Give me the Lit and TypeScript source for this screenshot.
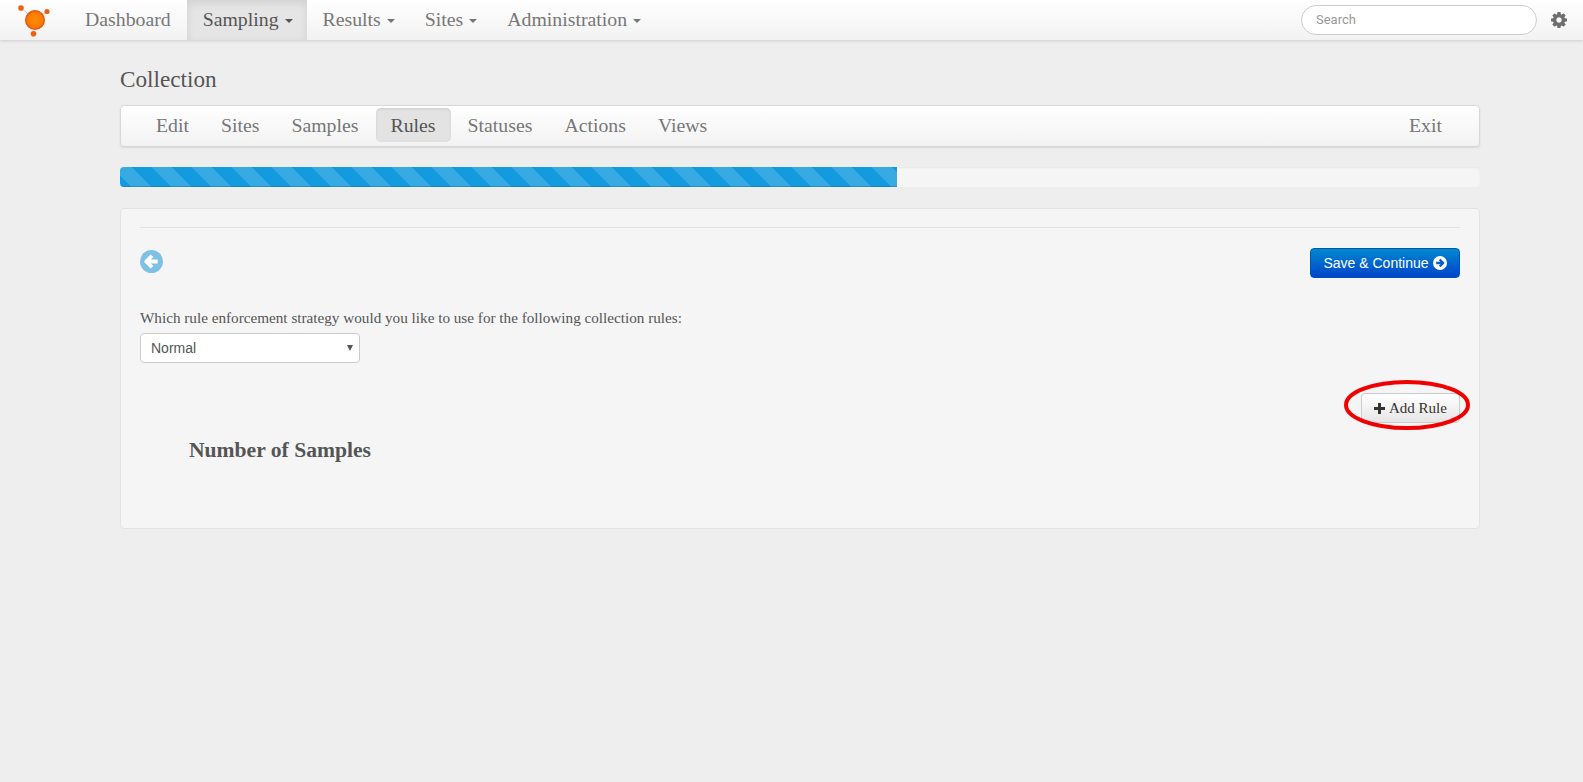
import { LitElement, html, css } from 'lit';
import { customElement } from 'lit/decorators.js';

const caret = html`<span class="caret"></span>`;

@customElement('app-root')
export class AppRoot extends LitElement {
  static styles = css`
    :host {
      display: block;
      min-height: 782px;
      background: #eeeeee;
      font-family: 'Liberation Serif', serif;
      color: #555;
      overflow: hidden;
    }
    .navbar {
      height: 40px;
      display: flex;
      align-items: stretch;
      background: linear-gradient(#ffffff, #f2f2f2);
      box-shadow: 0 1px 3px rgba(0, 0, 0, 0.14);
    }
    .brand {
      width: 69px;
      flex: none;
    }
    .brand svg {
      display: block;
    }
    .tab {
      display: flex;
      align-items: center;
      padding: 0 16px 2px;
      font-size: 19.8px;
      color: #777;
    }
    .tab.active {
      color: #555;
      background: #e5e5e5;
      box-shadow: inset 0 3px 8px rgba(0, 0, 0, 0.09);
    }
    .caret {
      display: inline-block;
      margin-left: 6px;
      margin-right: -2px;
      margin-top: 4px;
      border-top: 4px solid #777;
      border-left: 4px solid transparent;
      border-right: 4px solid transparent;
    }
    .active .caret {
      border-top-color: #555;
    }
    .spacer {
      flex: 1;
    }
    .search {
      align-self: center;
      box-sizing: border-box;
      width: 236px;
      height: 30px;
      margin-right: 14px;
      padding: 0 14px;
      border: 1px solid #cccccc;
      border-radius: 15px;
      background: #fff;
      font: 13px Roboto, sans-serif;
      line-height: 28px;
      color: #999;
    }
    .gear {
      align-self: center;
      margin-right: 16px;
      display: block;
    }
    .container {
      margin: 0 103px 0 120px;
    }
    h1 {
      margin: 25px 0 0;
      font-size: 23.2px;
      line-height: 28px;
      font-weight: 400;
      color: #555;
    }
    .subnav {
      margin-top: 12px;
      height: 42px;
      box-sizing: border-box;
      display: flex;
      align-items: flex-start;
      padding: 2px 20px 0;
      background: linear-gradient(#ffffff, #f2f2f2);
      border: 1px solid #d8d8d8;
      border-radius: 4px;
      box-shadow: 0 1px 2px rgba(0, 0, 0, 0.1);
    }
    .pill {
      height: 34px;
      display: flex;
      align-items: center;
      padding: 0 15px;
      margin-right: 2px;
      font-size: 19.8px;
      color: #777;
      border-radius: 5px;
    }
    .pill.active {
      color: #555;
      background: #e3e3e3;
      box-shadow: inset 0 1px 3px rgba(0, 0, 0, 0.1);
    }
    .progress {
      margin-top: 20px;
      height: 20px;
      border-radius: 4px;
      background: #f5f5f5;
      box-shadow: inset 0 1px 2px rgba(0, 0, 0, 0.06);
      overflow: hidden;
    }
    .bar {
      height: 100%;
      box-sizing: border-box;
      background-color: #149bdf;
      background-image: linear-gradient(
        45deg,
        rgba(255, 255, 255, 0.15) 25%,
        transparent 25%,
        transparent 50%,
        rgba(255, 255, 255, 0.15) 50%,
        rgba(255, 255, 255, 0.15) 75%,
        transparent 75%,
        transparent
      );
      background-size: 40px 40px;
      background-position: -8px 0;
      box-shadow: inset 0 -1px 0 rgba(0, 0, 0, 0.15);
    }
    .panel {
      margin-top: 21px;
      box-sizing: border-box;
      height: 321px;
      padding: 18px 19px 0;
      background: #f5f5f5;
      border: 1px solid #e3e3e3;
      border-radius: 4px;
    }
    hr {
      margin: 0;
      border: 0;
      border-top: 1px solid #e3e3e3;
    }
    .actions {
      margin-top: 20px;
      display: flex;
      justify-content: space-between;
      align-items: flex-start;
    }
    .back {
      display: block;
      margin-top: 2px;
    }
    .save {
      box-sizing: border-box;
      width: 150px;
      height: 30px;
      display: flex;
      align-items: center;
      justify-content: center;
      gap: 4px;
      border: 1px solid #0055b3;
      border-radius: 4px;
      background: linear-gradient(#0088cc, #0044cc);
      color: #fff;
      font: 14px 'Liberation Sans', sans-serif;
    }
    .label {
      margin-top: 30px;
      font-size: 15.2px;
      line-height: 20px;
      white-space: nowrap;
    }
    .select {
      margin-top: 5px;
      box-sizing: border-box;
      width: 220px;
      height: 30px;
      display: flex;
      align-items: center;
      justify-content: space-between;
      padding: 0 6px 0 10px;
      background: #fff;
      border: 1px solid #cccccc;
      border-radius: 4px;
      font: 14px 'Liberation Sans', sans-serif;
      color: #555;
    }
    .arrow {
      border-top: 6px solid #555;
      border-left: 3.5px solid transparent;
      border-right: 3.5px solid transparent;
    }
    .rule-row {
      margin-top: 30px;
      display: flex;
      justify-content: flex-end;
    }
    .add {
      position: relative;
      box-sizing: border-box;
      width: 99px;
      height: 30px;
      display: flex;
      align-items: center;
      justify-content: center;
      gap: 4px;
      border: 1px solid #ccc;
      border-radius: 4px;
      background: linear-gradient(#ffffff, #e6e6e6);
      font-size: 15px;
      color: #333;
    }
    .ring {
      position: absolute;
      left: -18px;
      top: -14px;
      display: block;
      pointer-events: none;
    }
    h2 {
      margin: 12px 0 0 49px;
      font-size: 21.6px;
      line-height: 30px;
      font-weight: 700;
      color: #555;
    }
  `;

  render() {
    return html`
      <nav class="navbar">
        <div class="brand">
          <svg width="69" height="40" viewBox="0 0 69 40">
            <line x1="21" y1="8" x2="34" y2="19" stroke="#ccc" stroke-width="1" />
            <line x1="47" y1="12" x2="34" y2="19" stroke="#ccc" stroke-width="1" />
            <defs>
              <radialGradient id="ball">
                <stop offset="0" stop-color="#ff8c00" />
                <stop offset="0.75" stop-color="#fb7a05" />
                <stop offset="1" stop-color="#d9480f" />
              </radialGradient>
            </defs>
            <circle cx="35" cy="20" r="10" fill="url(#ball)" />
            <circle cx="21" cy="8" r="2.8" fill="#f0600f" />
            <circle cx="47" cy="11.500" r="2.6" fill="#f0600f" />
            <circle cx="33.500" cy="33.700" r="2.8" fill="#f0600f" />
          </svg>
        </div>
        <div class="tab">Dashboard</div>
        <div class="tab active">Sampling${caret}</div>
        <div class="tab">Results${caret}</div>
        <div class="tab">Sites${caret}</div>
        <div class="tab">Administration${caret}</div>
        <div class="spacer"></div>
        <div class="search">Search</div>
        <svg class="gear" width="16" height="16" viewBox="0 -128 1536 1536" fill="#6e6e6e">
          <path
            d="M1024 640q0-106-75-181t-181-75-181 75-75 181 75 181 181 75 181-75 75-181zm512-109v222q0 12-8 23t-20 13l-185 28q-19 54-39 91 35 50 107 138 10 12 10 25t-9 23q-27 37-99 108t-94 71q-12 0-26-9l-138-108q-44 23-91 38-16 136-29 186-7 28-36 28h-222q-14 0-24.500-8.500t-11.500-21.500l-28-184q-49-16-90-37l-141 107q-10 9-25 9-14 0-25-11-126-114-165-168-7-10-7-23 0-12 8-23 15-21 51-66.500t54-70.500q-27-50-41-99l-183-27q-13-2-21-12.500t-8-23.500v-222q0-12 8-23t19-13l186-28q14-46 39-92-40-57-107-138-10-12-10-24 0-10 9-23 26-36 98.500-107.500t94.500-71.500q13 0 26 10l138 107q44-23 91-38 16-136 29-186 7-28 36-28h222q14 0 24.500 8.500t11.500 21.500l28 184q49 16 90 37l142-107q9-9 24-9 13 0 25 10 129 119 165 170 7 8 7 22 0 12-8 23-15 21-51 66.500t-54 70.500q26 50 41 98l183 28q13 2 21 12.500t8 23.500z"
          />
        </svg>
      </nav>

      <main class="container">
        <h1>Collection</h1>
        <div class="subnav">
          <div class="pill">Edit</div>
          <div class="pill">Sites</div>
          <div class="pill">Samples</div>
          <div class="pill active">Rules</div>
          <div class="pill">Statuses</div>
          <div class="pill">Actions</div>
          <div class="pill">Views</div>
          <div class="spacer"></div>
          <div class="pill">Exit</div>
        </div>

        <div class="progress">
          <div class="bar" style="width: ${(777 / 1360) * 100}%"></div>
        </div>

        <section class="panel">
          <hr />
          <div class="actions">
            <svg class="back" width="23" height="23" viewBox="0 0 24 24">
              <circle cx="12" cy="12" r="12" fill="#7fc0e6" />
              <path
                d="M18.500 12H7M12.500 6l-6 6 6 6"
                fill="none"
                stroke="#fff"
                stroke-width="4"
                stroke-linejoin="round"
              />
            </svg>
            <div class="save">
              Save &amp; Continue
              <svg width="14" height="14" viewBox="0 0 24 24">
                <circle cx="12" cy="12" r="12" fill="#fff" />
                <path
                  d="M5.500 12H17M11.500 6l6 6-6 6"
                  fill="none"
                  stroke="#0a5fc4"
                  stroke-width="4"
                  stroke-linejoin="round"
                />
              </svg>
            </div>
          </div>
          <div class="label">
            Which rule enforcement strategy would you like to use for the following collection rules:
          </div>
          <div class="select">Normal<span class="arrow"></span></div>
          <div class="rule-row">
            <div class="add">
              <svg width="11" height="11" viewBox="0 0 11 11" fill="#333">
                <path d="M4 0h3v4h4v3H7v4H4V7H0V4h4z" />
              </svg>
              Add Rule
              <svg class="ring" width="126" height="50" viewBox="0 0 126 50" fill="none">
                <ellipse cx="63" cy="25" rx="61" ry="23" stroke="#f00000" stroke-width="4" />
              </svg>
            </div>
          </div>
          <h2>Number of Samples</h2>
        </section>
      </main>
    `;
  }
}
